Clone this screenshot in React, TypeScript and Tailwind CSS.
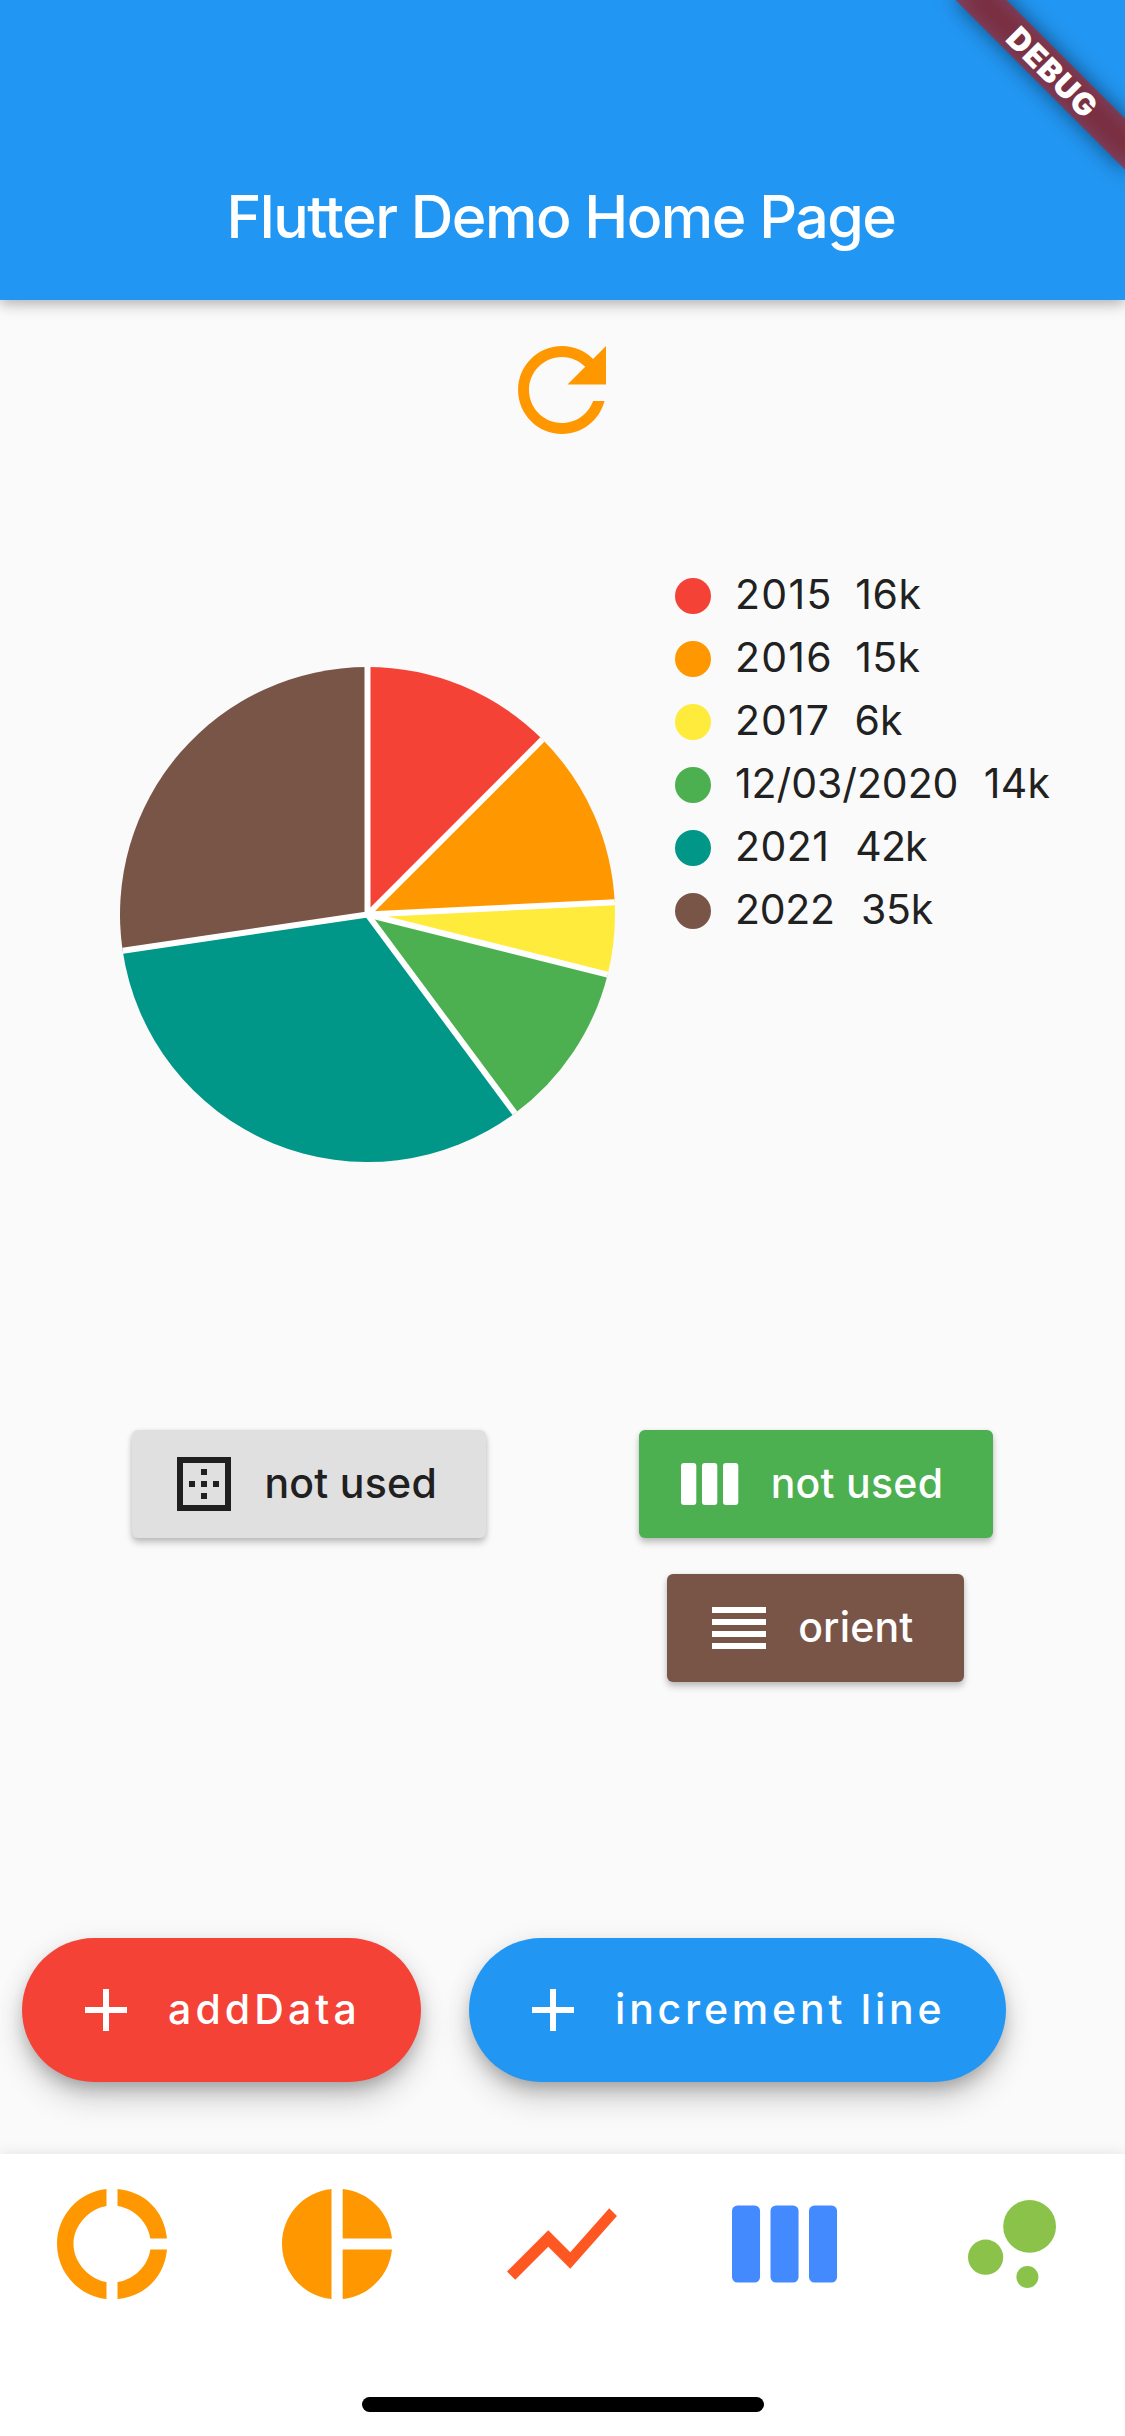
import React from "react";

type IconProps = { className: string; children: React.ReactNode };

function Icon({ className, children }: IconProps) {
  return (
    <svg viewBox="0 0 24 24" fill="currentColor" aria-hidden="true" className={`block shrink-0 ${className}`}>
      {children}
    </svg>
  );
}

const columns = (
  <>
    <rect x="2" y="5" width="5.1" height="14" rx="1" />
    <rect x="9" y="5" width="5.1" height="14" rx="1" />
    <rect x="16" y="5" width="5.1" height="14" rx="1" />
  </>
);

const slices = [
  { label: "2015", value: 16, color: "#f44336", dot: "bg-[#f44336]", width: "w-[120.3px]", spacing: "tracking-[1.3px]", valueSpacing: "tracking-[0.5px]" },
  { label: "2016", value: 15, color: "#ff9800", dot: "bg-[#ff9800]", width: "w-[120.3px]", spacing: "tracking-[1.2px]", valueSpacing: "tracking-[0.3px]" },
  { label: "2017", value: 6, color: "#ffeb3b", dot: "bg-[#ffeb3b]", width: "w-[119.5px]", spacing: "tracking-[1.1px]", valueSpacing: "tracking-[0px]" },
  { label: "12/03/2020", value: 14, color: "#4caf50", dot: "bg-[#4caf50]", width: "w-[248.8px]", spacing: "tracking-[-0.08px]", valueSpacing: "tracking-[0.3px]" },
  { label: "2021", value: 42, color: "#009688", dot: "bg-[#009688]", width: "w-[120.3px]", spacing: "tracking-[0.5px]", valueSpacing: "tracking-[-0.9px]" },
  { label: "2022", value: 35, color: "#795548", dot: "bg-[#795548]", width: "w-[126px]", spacing: "tracking-[-0.3px]", valueSpacing: "tracking-[-0.2px]" },
];

function PieChart() {
  const total = slices.reduce((sum, s) => sum + s.value, 0);
  const r = 247.5;
  const point = (v: number) => {
    const a = (v / total) * 2 * Math.PI;
    return [r + r * Math.sin(a), r - r * Math.cos(a)];
  };
  let acc = 0;
  const parts = slices.map((s) => {
    const start = point(acc);
    acc += s.value;
    return { color: s.color, start, end: point(acc) };
  });
  return (
    <svg viewBox="0 0 495 495" className="mt-[103px] block h-[495px] w-[495px] shrink-0 overflow-visible">
      {parts.map((p) => (
        <path key={p.color} fill={p.color} d={`M${r} ${r}L${p.start[0]} ${p.start[1]}A${r} ${r} 0 0 1 ${p.end[0]} ${p.end[1]}Z`} />
      ))}
      {parts.map((p) => (
        <line key={p.color} x1={r} y1={r} x2={p.start[0]} y2={p.start[1]} stroke="#fff" strokeWidth="6" />
      ))}
    </svg>
  );
}

function RaisedButton({ className, icon, label }: { className: string; icon: React.ReactNode; label: React.ReactNode }) {
  return (
    <button
      className={`flex h-[108px] items-center gap-6 rounded-md pl-9 font-medium text-[41px] leading-none shadow-[0_5px_7px_rgba(0,0,0,0.2),0_1px_5px_rgba(0,0,0,0.1)] ${className}`}
    >
      <Icon className="size-[72px]">{icon}</Icon>
      <span className="pb-0.5 whitespace-nowrap">{label}</span>
    </button>
  );
}

function Fab({ className, label }: { className: string; label: string }) {
  return (
    <button
      className={`flex h-36 items-center gap-[26px] rounded-full pl-12 font-medium text-[41px] leading-none text-white shadow-[0_9px_15px_-3px_rgba(0,0,0,0.2),0_18px_30px_rgba(0,0,0,0.16),0_3px_30px_rgba(0,0,0,0.06)] ${className}`}
    >
      <Icon className="size-[72px]">
        <path d="M19 13h-6v6h-2v-6H5v-2h6V5h2v6h6v2z" />
      </Icon>
      <span className="pb-0.5 whitespace-nowrap">{label}</span>
    </button>
  );
}

function DebugBanner() {
  return (
    <div className="absolute top-0 right-0 z-20 size-[200px] overflow-hidden">
      <div className="absolute top-[54px] left-[8px] h-9 w-60 rotate-45">
        <div className="absolute inset-0 bg-black/50 blur-[10.9px]" />
        <div className="relative flex h-9 items-center justify-center bg-[#b71c1c]/63 text-[31px] leading-none font-black tracking-[1.2px] text-white">
          DEBUG
        </div>
      </div>
    </div>
  );
}

export default function App() {
  return (
    <div className="relative flex h-[2436px] w-[1125px] flex-col overflow-hidden bg-[#fafafa] font-['Inter','Roboto',sans-serif]">
      <DebugBanner />
      <header className="z-10 flex h-[300px] shrink-0 items-center justify-center bg-[#2196f3] pt-[132px] pr-[3px] shadow-[0_4px_12px_rgba(0,0,0,0.2),0_3px_18px_rgba(0,0,0,0.12)]">
        <h1 className="text-[59px] leading-none font-medium tracking-[-1.5px] whitespace-nowrap text-white">
          Flutter Demo Home Page
        </h1>
      </header>

      <main className="flex flex-1 flex-col">
        <div className="flex justify-center pt-6 pr-px text-[#ff9800]">
          <Icon className="size-[132px]">
            <path d="M17.65 6.35C16.2 4.9 14.21 4 12 4c-4.42 0-7.99 3.58-7.99 8s3.57 8 7.99 8c3.73 0 6.84-2.55 7.73-6h-2.08c-.82 2.33-3.04 4-5.65 4-3.31 0-6-2.69-6-6s2.69-6 6-6c1.66 0 3.14.69 4.22 1.78L13 11h7V4l-2.35 2.35z" />
          </Icon>
        </div>

        <section className="mt-[108px] flex gap-[60px] pl-[120px]">
          <PieChart />
          <ul className="flex flex-col">
            {slices.map((s) => (
              <li key={s.label} className="flex h-[63px] items-center text-[41px] leading-none text-[#212121]">
                <span className={`mr-6 size-9 rounded-full ${s.dot}`} />
                <span className={`pb-0.5 ${s.width} ${s.spacing}`}>{s.label}</span>
                <span className={`pb-0.5 ${s.valueSpacing}`}>{s.value}k</span>
              </li>
            ))}
          </ul>
        </section>

        <section className="mt-[268px] grid grid-cols-2 px-[56.25px]">
          <div className="flex flex-col items-center">
            <RaisedButton
              className="w-[354px] bg-[#e0e0e0] text-[#202020]"
              icon={
                <path d="M13 7h-2v2h2V7zm0 4h-2v2h2v-2zm4 0h-2v2h2v-2zM3 3v18h18V3H3zm16 16H5V5h14v14zm-6-4h-2v2h2v-2zm-4-4H7v2h2v-2z" />
              }
              label={<span className="tracking-[0.27px]">not used</span>}
            />
          </div>
          <div className="flex flex-col items-center gap-9">
            <RaisedButton
              className="w-[354px] bg-[#4caf50] text-white"
              icon={columns}
              label={<span className="tracking-[0.27px]">not used</span>}
            />
            <RaisedButton
              className="w-[297px] bg-[#795548] text-white"
              icon={<path d="M3 15h18v-2H3v2zm0 4h18v-2H3v2zm0-8h18V9H3v2zm0-6v2h18V5H3z" />}
              label={<span className="-ml-px tracking-[0.2px]">orient</span>}
            />
          </div>
        </section>

        <div className="mt-64 flex gap-12 pl-[22px]">
          <Fab className="w-[399px] bg-[#f44336] tracking-[4.1px]" label="addData" />
          <Fab className="w-[537px] bg-[#2196f3] tracking-[3.8px]" label="increment line" />
        </div>
      </main>

      <nav className="flex h-[282px] shrink-0 flex-col items-center justify-between bg-white pt-6 pb-6 shadow-[0_0_14px_rgba(0,0,0,0.1)]">
        <div className="grid w-full grid-cols-5 justify-items-center pr-px">
          <Icon className="size-[132px] text-[#ff9800]">
            <path d="M11 5.08V2c-5 .5-9 4.81-9 10s4 9.5 9 10v-3.08c-3-.48-6-3.4-6-6.92s3-6.44 6-6.92zM18.97 11H22c-.47-5-4-8.53-9-9v3.08C16 5.51 18.54 8 18.97 11zM13 18.92V22c5-.47 8.53-4 9-9h-3.03c-.43 3-2.97 5.49-5.97 5.92z" />
          </Icon>
          <Icon className="size-[132px] text-[#ff9800]">
            <path d="M11 2v20c-5.07-.5-9-4.79-9-10s3.93-9.5 9-10zm2.03 0v8.99H22c-.47-4.74-4.24-8.52-8.97-8.99zm0 11.01V22c4.74-.47 8.5-4.25 8.97-8.99h-8.97z" />
          </Icon>
          <Icon className="size-[132px] text-[#ff5722]">
            <path d="M3.5 18.49l6-6.01 4 4L22 6.92l-1.41-1.41-7.09 7.97-4-4L2 16.99z" />
          </Icon>
          <Icon className="size-[132px] text-[#448aff]">{columns}</Icon>
          <Icon className="size-[132px] text-[#8bc34a]">
            <circle cx="7.2" cy="14.4" r="3.2" />
            <circle cx="14.8" cy="18" r="2" />
            <circle cx="15.2" cy="8.8" r="4.8" />
          </Icon>
        </div>
        <div className="h-[15px] w-[402px] rounded-full bg-black" />
      </nav>
    </div>
  );
}
